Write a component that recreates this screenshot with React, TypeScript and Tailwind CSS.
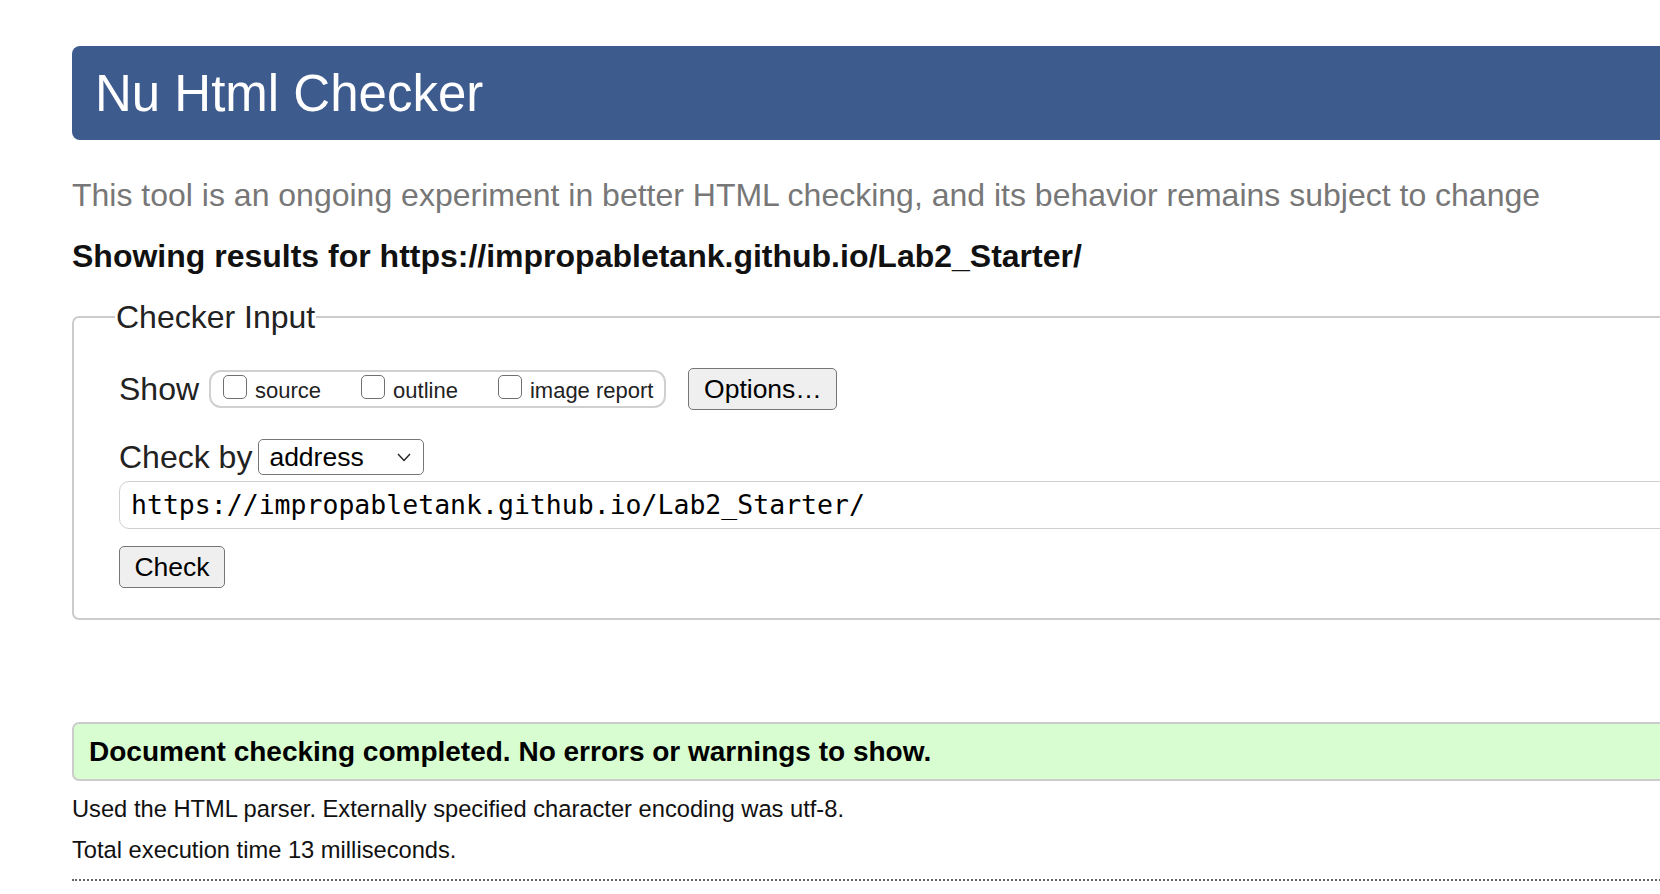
import React from 'react';

function Box({ label }: { label: string }) {
  return (
    <label className="flex items-end gap-[8px]">
      <input
        type="checkbox"
        className="mb-[5px] block h-[24px] w-[24px] appearance-none rounded-[5px] border-[1.5px] border-[#6f6f6f] bg-white"
      />
      <span className="text-[22px] leading-[26px] text-[#222]">{label}</span>
    </label>
  );
}

function CheckerInput() {
  return (
    <fieldset className="mt-[23px] rounded-[7px] border-2 border-[#cccccc] pb-[30px] pl-[45px]">
      <legend className="-ml-[4px] px-[1px] text-[32px] leading-[38px] text-[#222]">Checker Input</legend>

      <div className="mt-[32px] flex items-center">
        <span className="text-[32px] leading-[38px] text-[#222]">Show</span>
        <div className="ml-[10px] flex h-[38px] items-center gap-[40px] rounded-[12px] border-2 border-[#d0d0d0] pl-[12px] pr-[11px]">
          <Box label="source" />
          <Box label="outline" />
          <Box label="image report" />
        </div>
        <button
          type="button"
          className="ml-[22px] h-[42px] w-[149px] rounded-[5px] border-[1.5px] border-[#767676] bg-[#efefef] text-[26.5px] leading-none text-black"
        >
          Options…
        </button>
      </div>

      <div className="mt-[28px] flex items-center">
        <span className="text-[32px] leading-[38px] text-[#222]">Check by</span>
        <div className="ml-[6px] flex h-[36px] w-[166px] items-center justify-between rounded-[5px] border-[1.5px] border-[#767676] bg-white pl-[10px] pr-[12px]">
          <span className="text-[26.5px] leading-none text-black">address</span>
          <svg width="14" height="9" viewBox="0 0 14 9" fill="none">
            <polyline points="1,1 7,7.5 13,1" stroke="#222" strokeWidth="1.4" />
          </svg>
        </div>
      </div>

      <div className="mt-[5px] flex h-[48px] items-center rounded-[10px] border-[1.5px] border-[#cfcfcf] bg-white pl-[11px]">
        <span className="font-['DejaVu_Sans_Mono',monospace] text-[26.5px] leading-none text-black">
          https://impropabletank.github.io/Lab2_Starter/
        </span>
      </div>

      <button
        type="button"
        className="mt-[17px] block h-[42px] w-[106px] rounded-[5px] border-[1.5px] border-[#767676] bg-[#efefef] text-[26.5px] leading-none text-black"
      >
        Check
      </button>
    </fieldset>
  );
}

export default function App() {
  return (
    <div className="h-screen w-screen overflow-hidden bg-white font-['Liberation_Sans',Arial,sans-serif]">
      <div className="ml-[72px] w-[1800px] pt-[46px]">
        <header className="flex h-[94px] items-center rounded-[8px] bg-[#3e5b8e] pl-[23px]">
          <h1 className="text-[51px] leading-none text-white">Nu Html Checker</h1>
        </header>

        <p className="mt-[36px] text-[32px] leading-[38px] text-[#777]">
          This tool is an ongoing experiment in better HTML checking, and its behavior remains subject to change
        </p>
        <p className="mt-[23px] text-[32px] font-bold leading-[38px] text-[#111]">
          Showing results for https://impropabletank.github.io/Lab2_Starter/
        </p>

        <CheckerInput />

        <div className="mt-[102px] flex h-[59px] items-center rounded-[7px] border-2 border-[#cccccc] bg-[#d8fdd1] pl-[15px]">
          <p className="text-[28px] font-bold leading-none text-black">
            Document checking completed. No errors or warnings to show.
          </p>
        </div>

        <p className="mt-[14px] text-[23.7px] leading-[28px] text-[#111]">
          Used the HTML parser. Externally specified character encoding was utf-8.
        </p>
        <p className="mt-[13px] text-[23.7px] leading-[28px] text-[#111]">Total execution time 13 milliseconds.</p>

        <div className="mt-[15px] border-t-2 border-dotted border-[#666]" />
      </div>
    </div>
  );
}
